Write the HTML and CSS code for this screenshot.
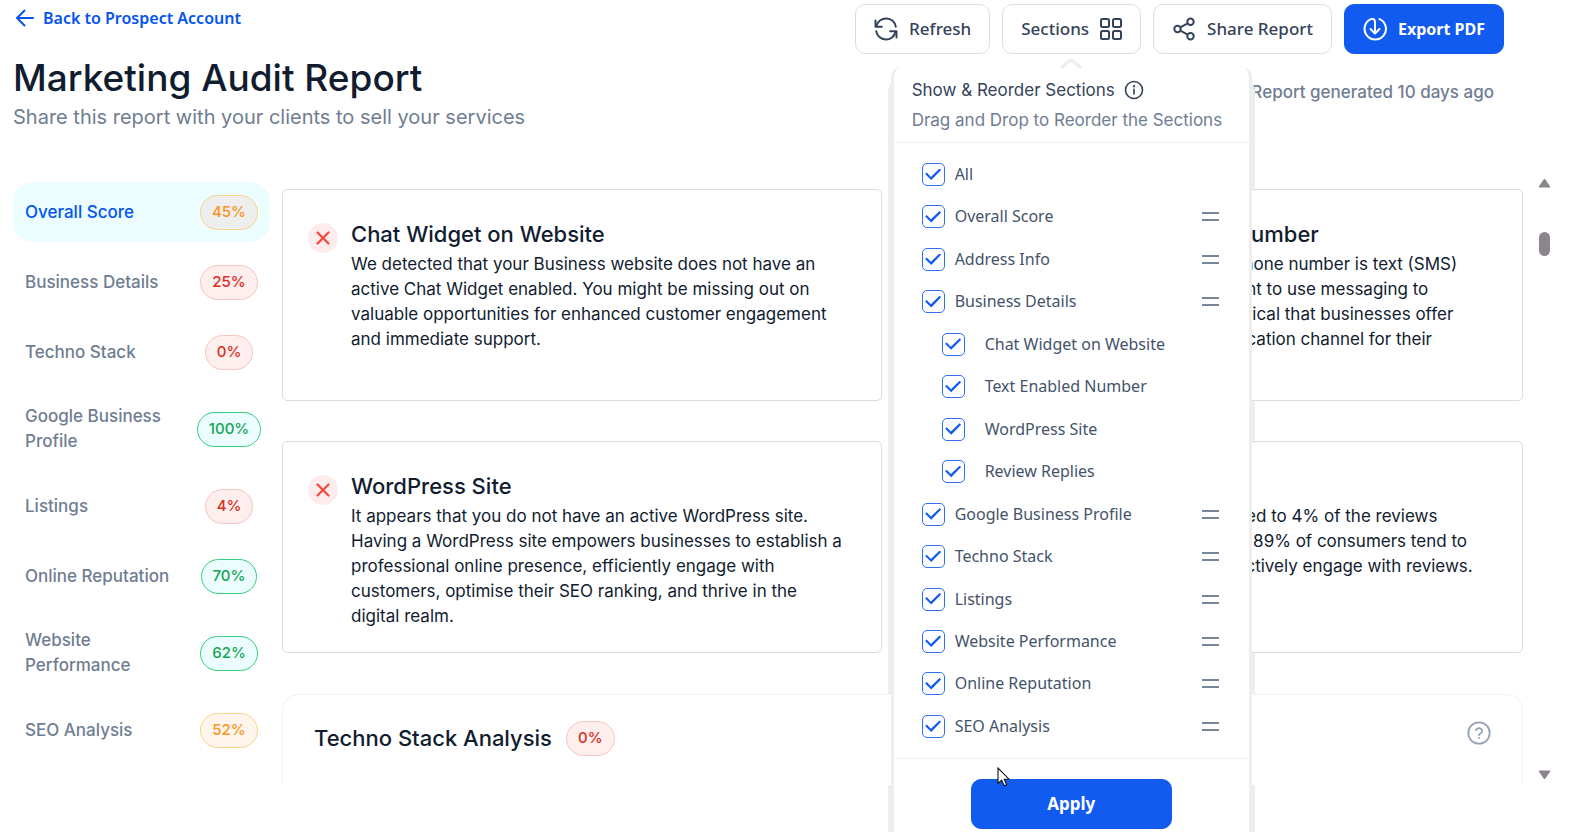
FILE: index.html
```html
<!DOCTYPE html>
<html lang="en">
<head>
<meta charset="utf-8">
<title>Marketing Audit Report</title>
<link rel="stylesheet" href="styles.css">
</head>
<body>
<header class="header">
  <div class="heading">
    <a class="back" href="#">
      <svg width="18" height="18" viewBox="0 0 18 18" fill="none" stroke="currentColor" stroke-width="2" stroke-linecap="round" stroke-linejoin="round"><path d="M17 9H1M8.500 1.500 1 9l7.500 7.500"/></svg>
      Back to Prospect Account
    </a>
    <h1 class="title">Marketing Audit Report</h1>
    <p class="subtitle">Share this report with your clients to sell your services</p>
  </div>
  <div class="tools">
    <div class="buttons">
      <button class="btn" type="button">
        <svg width="24" height="24" viewBox="0 0 24 24" fill="none" stroke="currentColor" stroke-width="2" stroke-linecap="round" stroke-linejoin="round"><path d="M1.500 3.500v6.300h6.300M22.500 20.500v-6.300h-6.300"/><path d="M2.500 9.300A9.800 9.800 0 0 1 21.800 9.700M21.500 14.700A9.800 9.800 0 0 1 2.200 14.200"/></svg>
        Refresh
      </button>
      <div class="dropdown">
        <button class="btn" type="button" aria-expanded="true">
          Sections
          <svg width="22" height="22" viewBox="0 0 22 22" fill="none" stroke="currentColor" stroke-width="2"><rect x="1" y="1" width="8" height="8" rx="1.500"/><rect x="13" y="1" width="8" height="8" rx="1.500"/><rect x="1" y="13" width="8" height="8" rx="1.500"/><rect x="13" y="13" width="8" height="8" rx="1.500"/></svg>
        </button>
        <div class="menu">
          <svg class="caret" width="26" height="13" viewBox="0 0 26 13"><path d="M0 13 13 0l13 13z" fill="#fff"/><path d="M3 10 10.500 3.500Q13 1.500 15.500 3.500L23 10" fill="none" stroke="#eee" stroke-width="3"/></svg>
          <form class="menu-body">
            <div class="menu-head">
              <div class="menu-title">Show &amp; Reorder Sections
                <svg width="20" height="20" viewBox="0 0 20 20" fill="none" stroke="currentColor" stroke-width="1.600" stroke-linecap="round"><circle cx="10" cy="10" r="8.500"/><path d="M10 9.300v4.700"/><circle cx="10" cy="6.300" r=".4"/></svg>
              </div>
              <div class="menu-hint">Drag and Drop to Reorder the Sections</div>
            </div>
            <ul class="options">
              <li class="option"><label class="check"><input type="checkbox" checked>All</label></li>
              <li class="option"><label class="check"><input type="checkbox" checked>Overall Score</label><span class="grip"></span></li>
              <li class="option"><label class="check"><input type="checkbox" checked>Address Info</label><span class="grip"></span></li>
              <li class="option"><label class="check"><input type="checkbox" checked>Business Details</label><span class="grip"></span></li>
              <li class="option sub"><label class="check"><input type="checkbox" checked>Chat Widget on Website</label></li>
              <li class="option sub"><label class="check"><input type="checkbox" checked>Text Enabled Number</label></li>
              <li class="option sub"><label class="check"><input type="checkbox" checked>WordPress Site</label></li>
              <li class="option sub"><label class="check"><input type="checkbox" checked>Review Replies</label></li>
              <li class="option"><label class="check"><input type="checkbox" checked>Google Business Profile</label><span class="grip"></span></li>
              <li class="option"><label class="check"><input type="checkbox" checked>Techno Stack</label><span class="grip"></span></li>
              <li class="option"><label class="check"><input type="checkbox" checked>Listings</label><span class="grip"></span></li>
              <li class="option"><label class="check"><input type="checkbox" checked>Website Performance</label><span class="grip"></span></li>
              <li class="option"><label class="check"><input type="checkbox" checked>Online Reputation</label><span class="grip"></span></li>
              <li class="option"><label class="check"><input type="checkbox" checked>SEO Analysis</label><span class="grip"></span></li>
            </ul>
            <div class="menu-foot"><button class="apply" type="button">Apply</button></div>
          </form>
        </div>
      </div>
      <button class="btn" type="button">
        <svg width="24" height="24" viewBox="0 0 24 24" fill="none" stroke="currentColor" stroke-width="2"><circle cx="18.500" cy="4.700" r="3.200"/><circle cx="5.500" cy="12" r="3.200"/><circle cx="18.500" cy="19.300" r="3.200"/><path d="m8.300 10.400 7.400-4.100M8.300 13.600l7.400 4.100"/></svg>
        Share Report
      </button>
      <button class="btn primary" type="button">
        <svg width="24" height="24" viewBox="0 0 24 24" fill="none" stroke="currentColor" stroke-width="2" stroke-linecap="round" stroke-linejoin="round"><path d="M16.500 2.100A10.700 10.700 0 1 1 8 2.100q4-1 4 2.900v11"/><path d="m7.500 12 4.500 4.500 4.500-4.500"/></svg>
        Export PDF
      </button>
    </div>
    <p class="generated">Report generated 10 days ago</p>
  </div>
</header>

<main class="main">
  <nav class="nav">
    <a class="nav-item active" href="#">Overall Score<span class="slot"><span class="pill mid">45%</span></span></a>
    <a class="nav-item" href="#">Business Details<span class="slot"><span class="pill low">25%</span></span></a>
    <a class="nav-item" href="#">Techno Stack<span class="slot"><span class="pill low">0%</span></span></a>
    <a class="nav-item" href="#">Google Business Profile<span class="slot"><span class="pill high">100%</span></span></a>
    <a class="nav-item" href="#">Listings<span class="slot"><span class="pill low">4%</span></span></a>
    <a class="nav-item" href="#">Online Reputation<span class="slot"><span class="pill high">70%</span></span></a>
    <a class="nav-item" href="#">Website Performance<span class="slot"><span class="pill high">62%</span></span></a>
    <a class="nav-item" href="#">SEO Analysis<span class="slot"><span class="pill mid">52%</span></span></a>
  </nav>

  <div class="content">
    <div class="cards">
      <article class="card">
        <svg class="cross" width="30" height="30" viewBox="0 0 30 30"><circle cx="15" cy="15" r="15" fill="#feecec"/><path d="m9.500 9.500 11 11m0-11-11 11" stroke="#f8453c" stroke-width="2.200" stroke-linecap="round"/></svg>
        <div>
          <h2 class="card-title">Chat Widget on Website</h2>
          <p class="card-text">We detected that your Business website does not have an<br>active Chat Widget enabled. You might be missing out on<br>valuable opportunities for enhanced customer engagement<br>and immediate support.</p>
        </div>
      </article>
      <article class="card">
        <svg class="cross" width="30" height="30" viewBox="0 0 30 30"><circle cx="15" cy="15" r="15" fill="#feecec"/><path d="m9.500 9.500 11 11m0-11-11 11" stroke="#f8453c" stroke-width="2.200" stroke-linecap="round"/></svg>
        <div>
          <h2 class="card-title">Text Enabled Business Number</h2>
          <p class="card-text">We detected that your mobile phone number is text (SMS)<br>enabled. Modern customers want to use messaging to<br>reach out to businesses. It is critical that businesses offer<br>text messaging as the communication channel for their<br>customers.</p>
        </div>
      </article>
      <article class="card">
        <svg class="cross" width="30" height="30" viewBox="0 0 30 30"><circle cx="15" cy="15" r="15" fill="#feecec"/><path d="m9.500 9.500 11 11m0-11-11 11" stroke="#f8453c" stroke-width="2.200" stroke-linecap="round"/></svg>
        <div>
          <h2 class="card-title">WordPress Site</h2>
          <p class="card-text">It appears that you do not have an active WordPress site.<br>Having a WordPress site empowers businesses to establish a<br>professional online presence, efficiently engage with<br>customers, optimise their SEO ranking, and thrive in the<br>digital realm.</p>
        </div>
      </article>
      <article class="card">
        <svg class="cross" width="30" height="30" viewBox="0 0 30 30"><circle cx="15" cy="15" r="15" fill="#feecec"/><path d="m9.500 9.500 11 11m0-11-11 11" stroke="#f8453c" stroke-width="2.200" stroke-linecap="round"/></svg>
        <div>
          <h2 class="card-title">Review Replies</h2>
          <p class="card-text">We detected that you have replied to 4% of the reviews<br>on your Google profiles. Around 89% of consumers tend to<br>choose those businesses that actively engage with reviews.</p>
        </div>
      </article>
    </div>
    <section class="panel">
      <h2 class="card-title">Techno Stack Analysis</h2>
      <span class="pill low">0%</span>
      <svg class="help" width="24" height="24" viewBox="0 0 24 24" fill="none" stroke="currentColor" stroke-width="1.800" stroke-linecap="round" stroke-linejoin="round"><circle cx="12" cy="12" r="10.700"/><path d="M8.900 9.200a3.200 3.200 0 0 1 6.200 1c0 2-3.100 2.300-3.100 3.800"/><path d="M12 17h.01"/></svg>
    </section>
  </div>

  <div class="scroll">
    <svg width="13" height="10" viewBox="0 0 13 10"><path d="M6.500 1 12 9H1z" fill="#8c858d" stroke="#8c858d" stroke-linejoin="round"/></svg>
    <span class="thumb"></span>
    <svg width="13" height="10" viewBox="0 0 13 10"><path d="M6.500 9 12 1H1z" fill="#8c858d" stroke="#8c858d" stroke-linejoin="round"/></svg>
  </div>
</main>

<svg class="cursor" width="13" height="20" viewBox="0 0 13 20"><path d="M1 1v15.500l3.600-3.400 2.600 5.700 2.500-1.100-2.500-5.500H12z" fill="#fff" stroke="#111" stroke-width="1.100"/></svg>
</body>
</html>
```
FILE: styles.css
```css
* {
  box-sizing: border-box;
}

body {
  margin: 0;
  height: 100vh;
  display: flex;
  flex-direction: column;
  overflow: hidden;
  position: relative;
  background: #fff;
  color: #111c2f;
  font: 400 17px/25px Inter, sans-serif;
}

h1, h2, p, ul {
  margin: 0;
  padding: 0;
}

a {
  text-decoration: none;
}

svg {
  flex: none;
}

button {
  font: inherit;
  cursor: pointer;
}

.header {
  display: flex;
  justify-content: space-between;
  padding: 4px 84px 0 13px;
}

.back {
  display: flex;
  align-items: center;
  gap: 9px;
  padding-left: 3px;
  height: 27px;
  color: #0454f0;
  font: 600 16px/26px "Noto Sans", "Open Sans", sans-serif;
}

.title {
  margin-top: 23px;
  font-size: 37px;
  font-weight: 500;
  line-height: 48px;
}

.subtitle {
  margin-top: 2px;
  color: #6f7d92;
  font-size: 20px;
  line-height: 26px;
}

.tools {
  display: flex;
  flex-direction: column;
}

.buttons {
  display: flex;
  gap: 12px;
}

.btn {
  display: flex;
  align-items: center;
  gap: 11px;
  height: 50px;
  padding: 0 18px;
  border: 1px solid #d9dfe0;
  border-radius: 10px;
  background: #fff;
  color: #34435a;
  font: 500 17px/24px "Noto Sans", "Open Sans", sans-serif;
}

.btn.primary {
  border-color: #115bf0;
  background: #115bf0;
  color: #fff;
  font-weight: 700;
  font-size: 16px;
}

.generated {
  margin: 26px 10px 0 0;
  text-align: right;
  color: #6f7d92;
  font-weight: 500;
}

.dropdown {
  position: relative;
}

.menu {
  position: absolute;
  top: 62px;
  left: 50%;
  width: 361px;
  margin-left: -181px;
}

.menu::before {
  content: "";
  position: absolute;
  inset: 10px -3px 0;
  z-index: 1;
  border-radius: 16px 16px 0 0;
  background: #eee;
}

.caret {
  position: absolute;
  top: -8px;
  left: 50%;
  margin-left: -13px;
  z-index: 4;
}

.menu-body {
  position: relative;
  z-index: 3;
  border: solid #eee;
  border-width: 0 3px;
  border-radius: 12px 12px 0 0;
  background: #fff;
}

.menu-head {
  padding: 9px 18px 7px;
  border-bottom: 1px solid #eaf3f9;
}

.menu-title {
  display: flex;
  align-items: center;
  gap: 9px;
  height: 30px;
  color: #34435a;
}

.menu-hint {
  color: #6f7d92;
  line-height: 30px;
}

.options {
  display: flex;
  flex-direction: column;
  justify-content: space-between;
  height: 616px;
  padding: 20px 30px 20px 28px;
  border-bottom: 1px solid #eaf3f9;
  list-style: none;
}

.option {
  display: flex;
  align-items: center;
  justify-content: space-between;
  height: 23px;
}

.check {
  display: flex;
  align-items: center;
  gap: 10px;
  color: #44536a;
  font: 400 16px/23px "Noto Sans", "Open Sans", sans-serif;
}

.check input {
  appearance: none;
  width: 23px;
  height: 23px;
  margin: 0;
  display: grid;
  place-items: center;
  border: 1px solid #2f6ff5;
  border-radius: 5px;
}

.check input:checked::before {
  content: "";
  width: 16px;
  height: 12px;
  background: #115bf0;
  clip-path: polygon(0 46%, 10% 34%, 36% 70%, 90% 0, 100% 12%, 38% 96%);
}

.sub {
  padding-left: 20px;
}

.sub .check {
  gap: 20px;
}

.grip {
  width: 17px;
  height: 9px;
  border: solid #78869b;
  border-width: 2px 0;
}

.menu-foot {
  display: flex;
  justify-content: center;
  padding: 20px 20px 24px;
}

.apply {
  width: 201px;
  height: 50px;
  border: 1px solid #115bf0;
  border-radius: 10px;
  background: #115bf0;
  color: #fff;
  font: 700 17px/24px "Noto Sans", "Open Sans", sans-serif;
}

.main {
  flex: 1;
  min-height: 0;
  display: flex;
  padding: 44px 37px 47px 13px;
}

.nav {
  width: 257px;
  flex: none;
  display: flex;
  flex-direction: column;
  gap: 10px;
  padding-top: 8px;
}

.nav-item {
  display: flex;
  align-items: center;
  justify-content: space-between;
  min-height: 60px;
  padding: 12px 0;
  padding-left: 12px;
  border-radius: 20px;
  color: #6f7d92;
  font-weight: 500;
}

.nav-item.active {
  background: #ebfdff;
  color: #0454f0;
}

.slot {
  width: 82px;
  flex: none;
  display: flex;
  justify-content: center;
}

.pill {
  height: 35px;
  padding: 0 11px;
  border: 1px solid;
  border-radius: 18px;
  font-size: 15px;
  font-weight: 500;
  line-height: 32px;
}

.low {
  border-color: #f7c5c0;
  background: #feeeed;
  color: #d92d20;
}

.mid {
  border-color: #f8d48a;
  background: #fff5ec;
  color: #f79420;
}

.active .mid {
  background: #eeeeee;
}

.high {
  border-color: #34cf7c;
  background: #ebfdff;
  color: #12a650;
}

.content {
  flex: 1;
  min-width: 0;
  overflow: hidden;
  padding: 15px 0 0 12px;
}

.cards {
  display: grid;
  grid-template-columns: 1fr 1fr;
  gap: 40px 41px;
}

.card {
  position: relative;
  z-index: 2;
  display: flex;
  align-items: flex-start;
  gap: 13px;
  min-height: 212px;
  padding: 27px 10px 22px 25px;
  border: 1px solid #dcdcde;
  border-radius: 5px;
  background: #fff;
  white-space: nowrap;
}

.cross {
  margin-top: 6px;
}

.card-title {
  font-size: 22px;
  font-weight: 500;
  line-height: 35px;
}

.panel {
  position: relative;
  z-index: 2;
  display: flex;
  align-items: flex-start;
  gap: 14px;
  min-height: 120px;
  margin-top: 41px;
  padding: 26px 31px;
  border: 1px solid #ebf3fb;
  border-radius: 16px;
  background: #fff;
}

.help {
  margin-left: auto;
  color: #95a2b5;
}

.scroll {
  width: 13px;
  margin-left: 15px;
  display: flex;
  flex-direction: column;
  justify-content: space-between;
  padding: 4px 0 5px;
}

.thumb {
  width: 11px;
  height: 24px;
  margin: 44px 1px auto;
  border-radius: 6px;
  background: #8c858d;
}

.cursor {
  position: absolute;
  top: 767px;
  left: 997px;
  z-index: 5;
}
```
